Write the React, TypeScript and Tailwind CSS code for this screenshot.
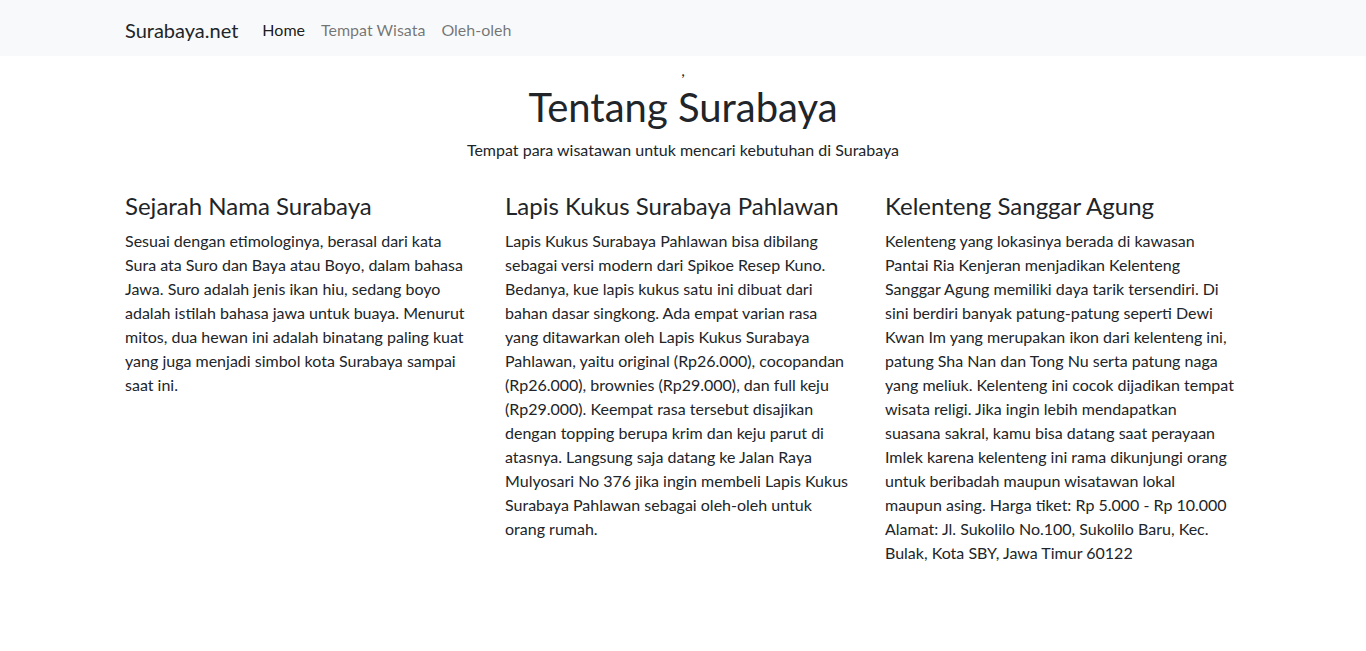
const col1 = [
  "Sesuai dengan etimologinya, berasal dari kata",
  "Sura ata Suro dan Baya atau Boyo, dalam bahasa",
  "Jawa. Suro adalah jenis ikan hiu, sedang boyo",
  "adalah istilah bahasa jawa untuk buaya. Menurut",
  "mitos, dua hewan ini adalah binatang paling kuat",
  "yang juga menjadi simbol kota Surabaya sampai",
  "saat ini.",
]

const col2 = [
  "Lapis Kukus Surabaya Pahlawan bisa dibilang",
  "sebagai versi modern dari Spikoe Resep Kuno.",
  "Bedanya, kue lapis kukus satu ini dibuat dari",
  "bahan dasar singkong. Ada empat varian rasa",
  "yang ditawarkan oleh Lapis Kukus Surabaya",
  "Pahlawan, yaitu original (Rp26.000), cocopandan",
  "(Rp26.000), brownies (Rp29.000), dan full keju",
  "(Rp29.000). Keempat rasa tersebut disajikan",
  "dengan topping berupa krim dan keju parut di",
  "atasnya. Langsung saja datang ke Jalan Raya",
  "Mulyosari No 376 jika ingin membeli Lapis Kukus",
  "Surabaya Pahlawan sebagai oleh-oleh untuk",
  "orang rumah.",
]

const col3 = [
  "Kelenteng yang lokasinya berada di kawasan",
  "Pantai Ria Kenjeran menjadikan Kelenteng",
  "Sanggar Agung memiliki daya tarik tersendiri. Di",
  "sini berdiri banyak patung-patung seperti Dewi",
  "Kwan Im yang merupakan ikon dari kelenteng ini,",
  "patung Sha Nan dan Tong Nu serta patung naga",
  "yang meliuk. Kelenteng ini cocok dijadikan tempat",
  "wisata religi. Jika ingin lebih mendapatkan",
  "suasana sakral, kamu bisa datang saat perayaan",
  "Imlek karena kelenteng ini rama dikunjungi orang",
  "untuk beribadah maupun wisatawan lokal",
  "maupun asing. Harga tiket: Rp 5.000 - Rp 10.000",
  "Alamat: Jl. Sukolilo No.100, Sukolilo Baru, Kec.",
  "Bulak, Kota SBY, Jawa Timur 60122",
]

function Column({ title, lines }: { title: string; lines: string[] }) {
  return (
    <div className="w-[380px] px-3">
      <h4 className="text-2xl leading-[28.8px] font-normal mb-2 whitespace-nowrap">{title}</h4>
      <p className="text-base leading-6">
        {lines.map((l, i) => (
          <span key={i} className="block whitespace-nowrap">{l}</span>
        ))}
      </p>
    </div>
  )
}

function App() {
  return (
    <main className="min-h-screen w-full bg-white text-[#212529] font-['Lato',sans-serif]">
      <nav className="bg-[#f8f9fa] pt-[10px] pb-[6px]">
        <div className="w-[1140px] mx-auto px-3 flex items-center">
          <a className="text-xl leading-[30px] py-[5px] mr-4">Surabaya.net</a>
          <a className="px-2 py-2 text-base leading-6 text-black/90">Home</a>
          <a className="px-2 py-2 text-base leading-6 text-black/55">Tempat Wisata</a>
          <a className="px-2 py-2 text-base leading-6 text-black/55">Oleh-oleh</a>
        </div>
      </nav>
      <section className="w-[1140px] mx-auto pt-[2px]">
        <div className="text-center text-base leading-6">,</div>
        <div className="text-center">
          <h1 className="text-[40px] leading-[48px] font-normal mb-2 pt-px">Tentang Surabaya</h1>
          <p className="text-base leading-6 -mt-px">Tempat para wisatawan untuk mencari kebutuhan di Surabaya</p>
        </div>
        <div className="flex mt-[30px]">
          <Column title="Sejarah Nama Surabaya" lines={col1} />
          <Column title="Lapis Kukus Surabaya Pahlawan" lines={col2} />
          <Column title="Kelenteng Sanggar Agung" lines={col3} />
        </div>
      </section>
    </main>
  )
}

export default App
